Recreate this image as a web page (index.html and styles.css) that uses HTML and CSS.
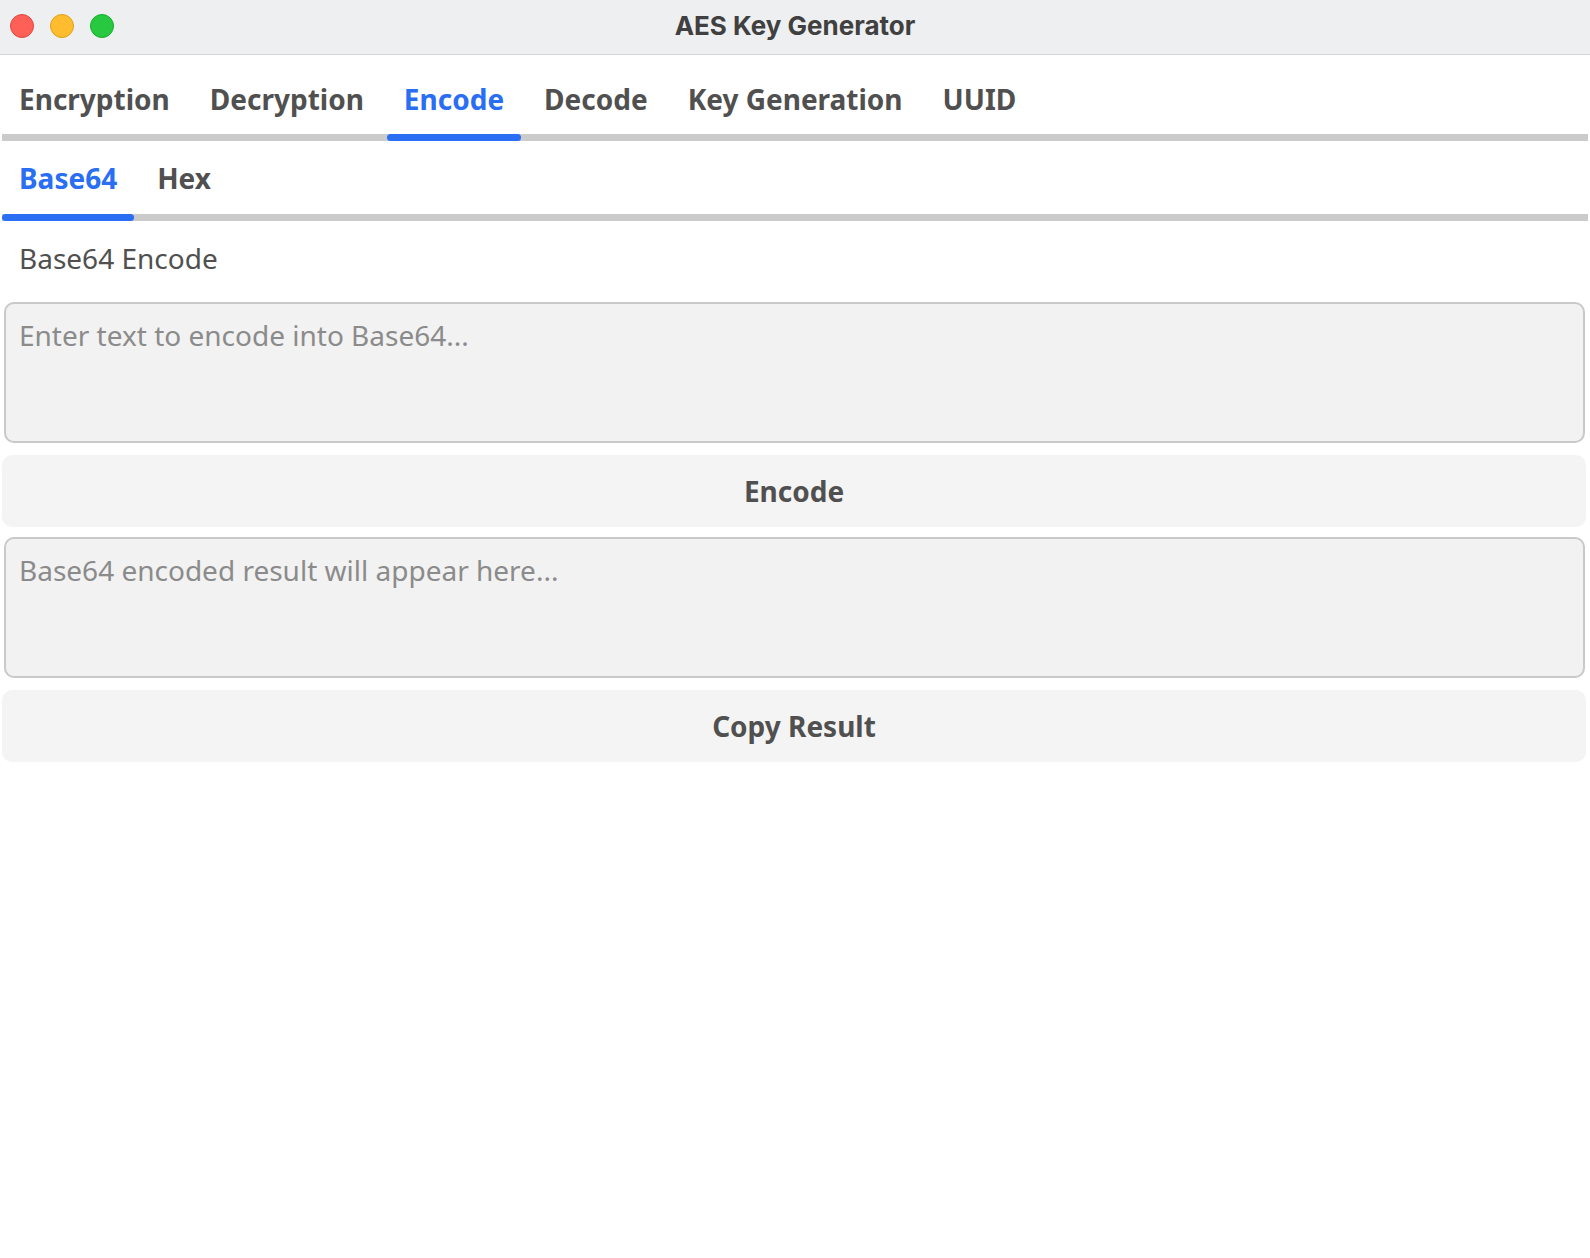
FILE: index.html
```html
<!DOCTYPE html>
<html lang="en">
<head>
<meta charset="utf-8">
<title>AES Key Generator</title>
<link rel="stylesheet" href="styles.css">
</head>
<body>
<div class="window">
  <header class="titlebar">
    <div class="lights">
      <span class="light red"></span>
      <span class="light yellow"></span>
      <span class="light green"></span>
    </div>
    <div class="title">AES Key Generator</div>
  </header>

  <nav class="tabbar main-tabs">
    <div class="tab">Encryption</div>
    <div class="tab">Decryption</div>
    <div class="tab active">Encode</div>
    <div class="tab">Decode</div>
    <div class="tab">Key Generation</div>
    <div class="tab">UUID</div>
  </nav>

  <nav class="tabbar sub-tabs">
    <div class="tab active">Base64</div>
    <div class="tab">Hex</div>
  </nav>

  <section class="panel">
    <div class="label">Base64 Encode</div>
    <textarea class="field" placeholder="Enter text to encode into Base64..."></textarea>
    <button class="btn">Encode</button>
    <textarea class="field" placeholder="Base64 encoded result will appear here..." readonly></textarea>
    <button class="btn">Copy Result</button>
  </section>
</div>
</body>
</html>
```

FILE: styles.css
```css
* { box-sizing: border-box; }

html, body {
  margin: 0;
  padding: 0;
  background: #ffffff;
}

body {
  font-family: "Noto Sans", "Open Sans", sans-serif;
  color: #505050;
  width: 1590px;
  height: 1258px;
  overflow: hidden;
}

.titlebar {
  position: relative;
  height: 55px;
  background: #eeeff1;
  border-bottom: 1px solid #d6d6d8;
  display: flex;
  align-items: center;
  justify-content: center;
}

.lights {
  position: absolute;
  left: 10px;
  top: 14px;
  display: flex;
  gap: 16px;
}

.light {
  width: 24px;
  height: 24px;
  border-radius: 50%;
  display: block;
}
.light.red { background: #fe5f57; border: 1px solid #e2463f; }
.light.yellow { background: #febc2e; border: 1px solid #e1a116; }
.light.green { background: #28c840; border: 1px solid #14ae2c; }

.title {
  font-family: Inter, "Noto Sans", sans-serif;
  font-weight: 700;
  font-size: 26px;
  color: #404040;
  margin-top: -4px;
}

.tabbar {
  display: flex;
  gap: 6px;
  margin: 0 2px;
  width: 1586px;
  background: linear-gradient(#cbcbcb, #cbcbcb) left bottom / 100% 7px no-repeat;
}

.tab {
  position: relative;
  font-weight: 700;
  font-size: 28px;
  line-height: 40px;
  padding: 24px 17px 22px;
  color: #505050;
  white-space: nowrap;
}

.sub-tabs .tab {
  padding: 17px 17px 23px;
}

.tab.active {
  color: #2a6ef3;
}

.tab.active::after {
  content: "";
  position: absolute;
  left: 0;
  right: 0;
  bottom: 0;
  height: 7px;
  border-radius: 4px;
  background: #2a6ef3;
}

.panel {
  display: flex;
  flex-direction: column;
  gap: 10px;
  margin: 0 2px;
  width: 1584px;
}

.label {
  font-size: 28px;
  line-height: 38px;
  padding: 18px 17px 15px;
  color: #505050;
}

.field {
  display: block;
  margin: 0 1px 2px 2px;
  height: 141px;
  width: calc(100% - 3px);
  resize: none;
  background: #f2f2f2;
  border: 2px solid #c9c9c9;
  border-radius: 10px;
  padding: 12px 13px;
  font-family: "Noto Sans", "Open Sans", sans-serif;
  font-size: 28px;
  line-height: 38px;
  color: #505050;
  outline: none;
}

.field::placeholder {
  color: #8b8b8b;
  opacity: 1;
}

.btn {
  display: block;
  width: 100%;
  height: 72px;
  border: none;
  border-radius: 10px;
  background: #f4f4f4;
  font-family: "Noto Sans", "Open Sans", sans-serif;
  font-weight: 700;
  font-size: 28px;
  color: #505050;
  padding: 0;
}
```
